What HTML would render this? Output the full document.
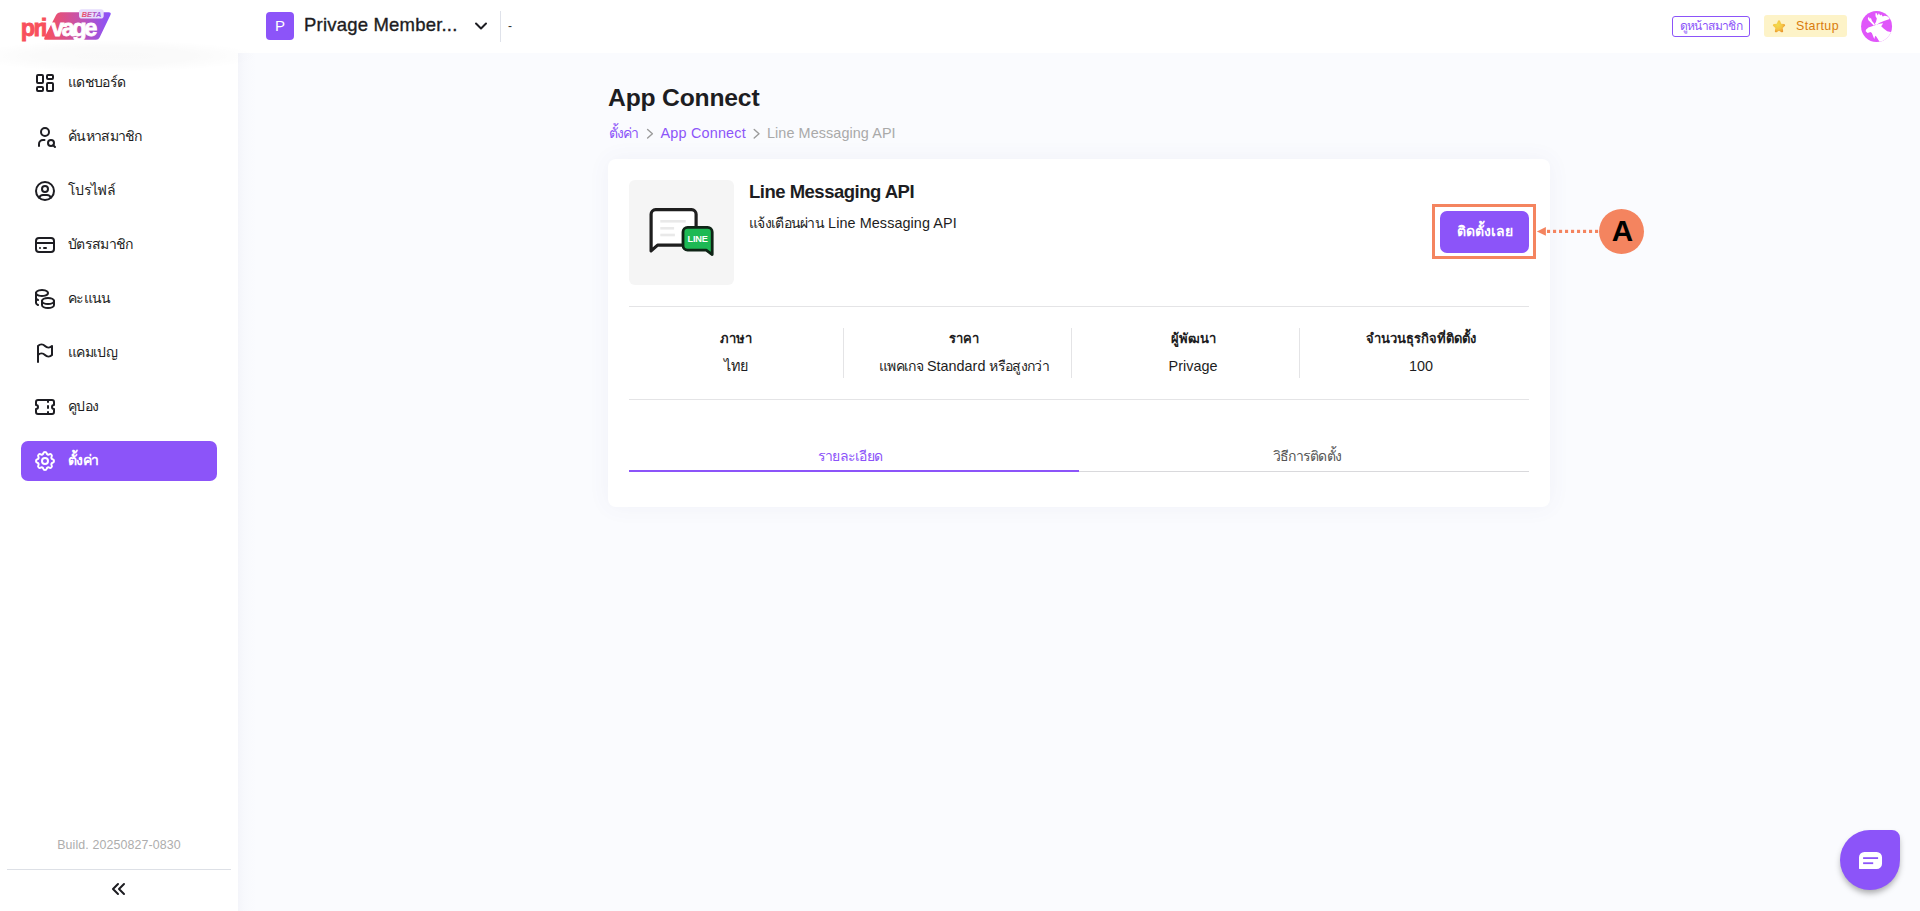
<!DOCTYPE html>
<html lang="th">
<head>
<meta charset="utf-8">
<title>App Connect - Line Messaging API</title>
<style>
*{box-sizing:border-box;margin:0;padding:0}
html,body{width:1920px;height:911px;overflow:hidden}
body{font-family:"Liberation Sans",sans-serif;color:#1d1d22;background:#fafbfe;position:relative;font-size:14px}
.abs{position:absolute}
/* header */
#header{position:absolute;left:0;top:0;width:1920px;height:53px;background:#fff;z-index:3}
#hshadow{position:absolute;left:-30px;top:40px;width:290px;height:32px;background:radial-gradient(ellipse 50% 50% at 50% 50%,rgba(0,0,0,.022) 0,rgba(0,0,0,.02) 55%,rgba(0,0,0,0) 100%);z-index:4}
#sidebar{position:absolute;left:0;top:53px;width:238px;height:858px;background:#fff;z-index:1}
#sideshadow{position:absolute;left:238px;top:53px;width:18px;height:858px;background:linear-gradient(90deg,#f4f5fa,#f8f9fd 40%,#fafbfe);z-index:0}
.pav{left:266px;top:12px;width:28px;height:28px;border-radius:4px;background:#8c54f9;color:#fff;font-size:15px;line-height:27px;text-align:center}
.brand{left:304px;top:11px;height:28px;line-height:28px;font-size:18.500px;white-space:nowrap;color:#1d1d22;-webkit-text-stroke:.35px #1d1d22;letter-spacing:.2px}
.vdiv{left:500px;top:11px;width:1px;height:31px;background:#dfe2ea}
.dash{left:508px;top:17px;font-size:12px;line-height:18px;color:#333}
.viewbtn{left:1672px;top:16px;width:78px;height:21px;border:1px solid #8c54f9;border-radius:3px;color:#8c54f9;font-size:12px;line-height:19px;text-align:center;white-space:nowrap;overflow:hidden;letter-spacing:-.6px}
.plan{left:1764px;top:15px;width:83px;height:22px;border-radius:3px;background:#fdf3c8;color:#d97b0b;font-size:13px;line-height:22px;white-space:nowrap}
.plan span{position:absolute;left:32px;top:0;font-size:12.400px;letter-spacing:.43px}
/* sidebar */
.nav{position:absolute;left:21px;width:196px;height:40px;border-radius:7px}
.nav svg{position:absolute;left:12px;top:8px;width:24px;height:24px;fill:none;stroke:#1d1d22;stroke-width:2;stroke-linecap:round;stroke-linejoin:round}
.nav span{position:absolute;left:47px;top:0;line-height:38px;font-size:14px;white-space:nowrap;color:#1d1d22;letter-spacing:-.7px}
.nav.on{background:#8c54f9}
.nav.on svg{stroke:#fff}
.nav.on span{color:#fff;font-weight:bold}
.build{left:0;top:837px;width:238px;text-align:center;font-size:12.400px;line-height:16px;color:#adadad;letter-spacing:.12px}
.sline{left:7px;top:869px;width:224px;height:1px;background:#dde0e6}
/* main */
h1{position:absolute;left:608px;top:81px;font-size:24.700px;line-height:34px;font-weight:bold;color:#1d1d22;white-space:nowrap;letter-spacing:-.2px}
.crumb{position:absolute;top:122px;font-size:14.400px;line-height:22px;white-space:nowrap;letter-spacing:.08px}
.pur{color:#8c54f9}
.gry{color:#a9a9a9}
#card{position:absolute;left:608px;top:159px;width:942px;height:348px;background:#fff;border-radius:8px;box-shadow:0 0 22px rgba(80,90,150,.06)}
.thumb{left:629px;top:180px;width:105px;height:105px;border-radius:6px;background:#f5f5f5}
.ctitle{left:749px;top:179px;font-size:18.500px;line-height:26px;font-weight:bold;white-space:nowrap;color:#1d1d22;letter-spacing:-.5px}
.cdesc{left:749px;top:212px;font-size:14.400px;line-height:22px;white-space:nowrap;color:#1d1d22;letter-spacing:.08px}
.th{letter-spacing:-.7px;font-size:14px}
.hl{position:absolute;left:629px;width:900px;height:1px;background:#e4e4e6}
.vl{position:absolute;top:328px;width:1px;height:50px;background:#e4e4e6}
.st{position:absolute;width:228px;text-align:center;white-space:nowrap}
.st b{display:block;font-size:13px;line-height:20px;margin-top:1px}
.st i{display:block;font-style:normal;font-size:14.400px;line-height:22px;margin-top:6px}
.tab{position:absolute;top:445px;width:200px;text-align:center;font-size:14px;line-height:22px;white-space:nowrap;letter-spacing:-.7px}
.hi{left:1432px;top:204px;width:104px;height:55px;border:3px solid #f4845f}
.inst{left:1440px;top:211px;width:89px;height:42px;border-radius:7px;background:#8c54f9;color:#fff;font-size:14px;font-weight:bold;line-height:40px;text-align:center;white-space:nowrap;overflow:hidden}
.ca{left:1599px;top:209px;width:45px;height:45px;border-radius:50%;background:#f4845f;color:#000;font-weight:bold;font-size:29.600px;line-height:43px;text-align:center;padding-left:2px}
</style>
</head>
<body>
<div id="sideshadow"></div>
<div id="sidebar"></div>
<div id="hshadow"></div>
<div id="header"></div>
<div id="top" style="position:absolute;left:0;top:0;z-index:5;width:1920px;height:53px">
<svg class="abs" style="left:14px;top:4px" width="110" height="44" viewBox="14 4 110 44"><defs><linearGradient id="lg" x1="44" y1="0" x2="110" y2="0" gradientUnits="userSpaceOnUse"><stop offset="0" stop-color="#fa4f58"/><stop offset=".5" stop-color="#c853a8"/><stop offset="1" stop-color="#8953fb"/></linearGradient><linearGradient id="bg2" x1="82" y1="0" x2="101" y2="0" gradientUnits="userSpaceOnUse"><stop offset="0" stop-color="#f24d62"/><stop offset="1" stop-color="#9354ee"/></linearGradient></defs>
<path d="M60.500 12.300H108.500Q111.800 12.300 110.300 15.200L99.600 37.600Q98.500 39.800 96 39.800H46Q43.200 39.800 44.600 37.200L56.200 14.800Q57.500 12.300 60.500 12.300z" fill="url(#lg)"/>
<text x="20.800" y="35.800" font-family="Liberation Sans, sans-serif" font-weight="bold" font-size="23.600" textLength="26.600" lengthAdjust="spacing" fill="#f8505c" stroke="#f8505c" stroke-width=".8">pri</text>
<text x="51" y="35.800" font-family="Liberation Sans, sans-serif" font-weight="bold" font-size="23.600" textLength="46.400" lengthAdjust="spacing" fill="#fff" stroke="#fff" stroke-width=".8">vage</text>
<rect x="79" y="9.200" width="24.700" height="9.400" rx="2.800" fill="#e6ddfd"/>
<text x="91.500" y="16.700" text-anchor="middle" font-family="Liberation Sans, sans-serif" font-weight="bold" font-style="italic" font-size="7.300" fill="url(#bg2)">BETA</text>
</svg>
<div class="abs pav">P</div>
<div class="abs brand">Privage Member...</div>
<svg class="abs" style="left:471px;top:16px" width="20" height="20" viewBox="0 0 24 24" fill="none" stroke="#1d1d22" stroke-width="2.4" stroke-linecap="round" stroke-linejoin="round"><path d="M6 9l6 6l6-6"/></svg>
<div class="abs vdiv"></div>
<div class="abs dash">-</div>
<div class="abs viewbtn">ดูหน้าสมาชิก</div>
<div class="abs plan"><svg class="abs" style="left:8px;top:4px" width="14" height="14" viewBox="0 0 24 24"><defs><radialGradient id="sg" cx=".4" cy=".38" r=".68"><stop offset="0" stop-color="#f0dc4e"/><stop offset=".55" stop-color="#f6c445"/><stop offset="1" stop-color="#e8922b"/></radialGradient></defs><path d="M12 2.2c.8 0 1.4.5 1.8 1.300l2.100 4.500 4.800.7c1.800.3 2.400 2.100 1.100 3.400l-3.500 3.500.8 4.900c.3 1.800-1.300 2.900-2.900 2.100L12 20.300l-4.200 2.300c-1.600.8-3.200-.3-2.900-2.100l.8-4.900-3.500-3.500c-1.300-1.300-.7-3.100 1.100-3.400l4.800-.7 2.100-4.500c.4-.8 1-1.300 1.800-1.300z" fill="url(#sg)"/></svg><span>Startup</span></div>
<svg class="abs" style="left:1858px;top:8px" width="38" height="38" viewBox="0 0 911 911"><defs><clipPath id="ac"><circle cx="445" cy="442" r="371"/></clipPath></defs><circle cx="445" cy="442" r="371" fill="#e056fa"/><g clip-path="url(#ac)" fill="#fff"><path d="M235 245L262 212L285 262L308 236L336 312L372 352L405 398L382 424L300 342L250 292z"/><path d="M398 392L432 330L452 250L420 200L418 126L450 128L470 182L500 124L532 182L560 158L592 202L640 188L700 198L745 236L760 262L620 312L520 352L440 408z"/><path d="M392 418L250 470L190 520L184 560L230 602L300 578L332 602L390 744L412 668L442 690L512 806L560 860L860 860L860 560L780 574L700 560L620 500L556 440L604 366L520 380L440 400z"/></g></svg>
</div>
<div id="side" style="position:absolute;left:0;top:0;z-index:4;width:238px;height:911px">
<div class="nav" style="top:63px"><svg viewBox="0 0 24 24"><path d="M5 4h4a1 1 0 0 1 1 1v6a1 1 0 0 1-1 1h-4a1 1 0 0 1-1-1v-6a1 1 0 0 1 1-1"/><path d="M5 16h4a1 1 0 0 1 1 1v2a1 1 0 0 1-1 1h-4a1 1 0 0 1-1-1v-2a1 1 0 0 1 1-1"/><path d="M15 12h4a1 1 0 0 1 1 1v6a1 1 0 0 1-1 1h-4a1 1 0 0 1-1-1v-6a1 1 0 0 1 1-1"/><path d="M15 4h4a1 1 0 0 1 1 1v2a1 1 0 0 1-1 1h-4a1 1 0 0 1-1-1v-2a1 1 0 0 1 1-1"/></svg><span>แดชบอร์ด</span></div>
<div class="nav" style="top:117px"><svg viewBox="0 0 24 24"><path d="M8 7a4 4 0 1 0 8 0a4 4 0 0 0-8 0"/><path d="M6 21v-2a4 4 0 0 1 4-4h1.5"/><path d="M15 18a3 3 0 1 0 6 0a3 3 0 1 0-6 0"/><path d="M20.2 20.2l1.8 1.8"/></svg><span>ค้นหาสมาชิก</span></div>
<div class="nav" style="top:171px"><svg viewBox="0 0 24 24"><path d="M3 12a9 9 0 1 0 18 0a9 9 0 1 0-18 0"/><path d="M9 10a3 3 0 1 0 6 0a3 3 0 1 0-6 0"/><path d="M6.168 18.849a4 4 0 0 1 3.832-2.849h4a4 4 0 0 1 3.834 2.855"/></svg><span>โปรไฟล์</span></div>
<div class="nav" style="top:225px"><svg viewBox="0 0 24 24"><path d="M3 8a3 3 0 0 1 3-3h12a3 3 0 0 1 3 3v8a3 3 0 0 1-3 3h-12a3 3 0 0 1-3-3z"/><path d="M3 10l18 0"/><path d="M7 15l.01 0"/><path d="M11 15l2 0"/></svg><span>บัตรสมาชิก</span></div>
<div class="nav" style="top:279px"><svg viewBox="0 0 24 24"><path d="M9 14c0 1.657 2.686 3 6 3s6-1.343 6-3s-2.686-3-6-3s-6 1.343-6 3z"/><path d="M9 14v4c0 1.656 2.686 3 6 3s6-1.344 6-3v-4"/><path d="M3 6c0 1.072 1.144 2.062 3 2.598s4.144.536 6 0c1.856-.536 3-1.526 3-2.598c0-1.072-1.144-2.062-3-2.598s-4.144-.536-6 0c-1.856.536-3 1.526-3 2.598z"/><path d="M3 6v10c0 .888.772 1.45 2 2"/><path d="M3 11c0 .888.772 1.45 2 2"/></svg><span>คะแนน</span></div>
<div class="nav" style="top:333px"><svg viewBox="0 0 24 24"><path d="M5 5a5 5 0 0 1 7 0a5 5 0 0 0 7 0v9a5 5 0 0 1-7 0a5 5 0 0 0-7 0v-9z"/><path d="M5 21v-7"/></svg><span>แคมเปญ</span></div>
<div class="nav" style="top:387px"><svg viewBox="0 0 24 24"><path d="M15 5l0 2"/><path d="M15 11l0 2"/><path d="M15 17l0 2"/><path d="M5 5h14a2 2 0 0 1 2 2v3a2 2 0 0 0 0 4v3a2 2 0 0 1-2 2h-14a2 2 0 0 1-2-2v-3a2 2 0 0 0 0-4v-3a2 2 0 0 1 2-2"/></svg><span>คูปอง</span></div>
<div class="nav on" style="top:441px"><svg viewBox="0 0 24 24"><path d="M10.325 4.317c.426-1.756 2.924-1.756 3.35 0a1.724 1.724 0 0 0 2.573 1.066c1.543-.94 3.31.826 2.37 2.37a1.724 1.724 0 0 0 1.065 2.572c1.756.426 1.756 2.924 0 3.35a1.724 1.724 0 0 0-1.066 2.573c.94 1.543-.826 3.31-2.37 2.37a1.724 1.724 0 0 0-2.572 1.065c-.426 1.756-2.924 1.756-3.35 0a1.724 1.724 0 0 0-2.573-1.066c-1.543.94-3.31-.826-2.37-2.37a1.724 1.724 0 0 0-1.065-2.572c-1.756-.426-1.756-2.924 0-3.35a1.724 1.724 0 0 0 1.066-2.573c-.94-1.543.826-3.31 2.37-2.37c1 .608 2.296.07 2.572-1.065z"/><path d="M9 12a3 3 0 1 0 6 0a3 3 0 0 0-6 0"/></svg><span>ตั้งค่า</span></div>
<div class="abs build">Build. 20250827-0830</div>
<div class="abs sline"></div>
<svg class="abs" style="left:107px;top:877px" width="24" height="24" viewBox="0 0 24 24" fill="none" stroke="#1d1d22" stroke-width="2" stroke-linecap="round" stroke-linejoin="round"><path d="M11 7l-5 5l5 5"/><path d="M17 7l-5 5l5 5"/></svg>
</div>
<h1>App Connect</h1>
<div class="crumb pur" style="left:608.500px"><span class="th">ตั้งค่า</span></div>
<svg class="abs" style="left:0;top:0" width="1920" height="160" viewBox="0 0 1920 160" fill="none" stroke="#9b9b9b" stroke-width="1.4" stroke-linecap="round" stroke-linejoin="round"><path d="M647.6 129.400L652.4 133.700L647.6 138"/></svg>
<div class="crumb pur" style="left:660.500px;letter-spacing:.2px">App Connect</div>
<svg class="abs" style="left:0;top:0" width="1920" height="160" viewBox="0 0 1920 160" fill="none" stroke="#9b9b9b" stroke-width="1.4" stroke-linecap="round" stroke-linejoin="round"><path d="M754.2 129.400L759.0 133.700L754.2 138"/></svg>
<div class="crumb gry" style="left:767px">Line Messaging API</div>
<div id="card"></div>
<div class="abs thumb"></div>
<svg class="abs" style="left:629px;top:180px" width="105" height="105" viewBox="0 0 105 105">
<path d="M26.6 29.7H62.6a4.5 4.5 0 0 1 4.5 4.5V65.1H28.6L22.1 70.9V34.2a4.5 4.5 0 0 1 4.5-4.5z" fill="#fff" stroke="#1e1e1e" stroke-width="3.2" stroke-linejoin="round"/>
<rect x="31.3" y="40" width="25.4" height="2.6" fill="#e9e9e9"/><rect x="31.3" y="47" width="13.8" height="2.6" fill="#e9e9e9"/><rect x="31.3" y="53.7" width="14.6" height="2.6" fill="#e9e9e9"/>
<path d="M58.6 47.4H78.6a4.6 4.6 0 0 1 4.6 4.6V74.6L77.2 70.2H58.6a4.6 4.6 0 0 1-4.6-4.6V52a4.6 4.6 0 0 1 4.6-4.6z" fill="#1db954" stroke="#0f2416" stroke-width="2.8" stroke-linejoin="round"/>
<text x="68.6" y="62.2" text-anchor="middle" font-family="Liberation Sans, sans-serif" font-weight="bold" font-size="9.2" fill="#fff" letter-spacing="-.2">LINE</text>
</svg>
<div class="abs ctitle">Line Messaging API</div>
<div class="abs cdesc"><span class="th">แจ้งเตือนผ่าน</span> Line Messaging API</div>
<div class="abs hi"></div>
<div class="abs inst">ติดตั้งเลย</div>
<svg class="abs" style="left:0;top:0" width="1920" height="911" viewBox="0 0 1920 911" fill="#f4845f"><path d="M1536.9 231.4L1545.9 227V235.8z"/><rect x="1547" y="229.8" width="3.1" height="3.2"/><rect x="1553" y="229.8" width="3.1" height="3.2"/><rect x="1559" y="229.8" width="3.1" height="3.2"/><rect x="1565" y="229.8" width="3.1" height="3.2"/><rect x="1571" y="229.8" width="3.1" height="3.2"/><rect x="1577" y="229.8" width="3.1" height="3.2"/><rect x="1583" y="229.8" width="3.1" height="3.2"/><rect x="1589" y="229.8" width="3.1" height="3.2"/><rect x="1595" y="229.8" width="3.1" height="3.2"/></svg>
<div class="abs ca">A</div>
<div class="hl" style="top:306px"></div>
<div class="hl" style="top:399px"></div>
<div class="vl" style="left:843px"></div>
<div class="vl" style="left:1071px"></div>
<div class="vl" style="left:1299px"></div>
<div class="st" style="left:622px;top:328px"><b>ภาษา</b><i>ไทย</i></div>
<div class="st" style="left:850px;top:328px"><b>ราคา</b><i><span class="th">แพคเกจ</span> Standard <span class="th">หรือสูงกว่า</span></i></div>
<div class="st" style="left:1079px;top:328px"><b>ผู้พัฒนา</b><i>Privage</i></div>
<div class="st" style="left:1307px;top:328px"><b>จำนวนธุรกิจที่ติดตั้ง</b><i>100</i></div>
<div class="tab pur" style="left:750px">รายละเอียด</div>
<div class="tab" style="left:1207px;color:#555">วิธีการติดตั้ง</div>
<div class="abs" style="left:629px;top:470px;width:450px;height:2px;background:#8c54f9"></div>
<div class="abs" style="left:1079px;top:471px;width:450px;height:1px;background:#d9d9dc"></div>
<div class="abs" style="left:1840px;top:830px;width:60px;height:60px;border-radius:30px 8px 30px 30px;background:#8c54f9;box-shadow:0 4px 6px -1px rgba(0,0,0,.34)"></div>
<svg class="abs" style="left:1859px;top:852px" width="24" height="18" viewBox="0 0 24 18"><path d="M5.500 0h12.500a5.500 5.500 0 0 1 5.500 5.500v6.500a5.500 5.500 0 0 1-5.500 5.500h-17.500a.5.500 0 0 1-.5-.5v-11.500a5.500 5.500 0 0 1 5.500-5.500z" fill="#fff" transform="scale(.98 .97)"/><rect x="4.100" y="5.200" width="15" height="1.800" fill="#8c54f9"/><rect x="4.100" y="10.300" width="10.100" height="1.800" fill="#8c54f9"/></svg>
</body>
</html>
